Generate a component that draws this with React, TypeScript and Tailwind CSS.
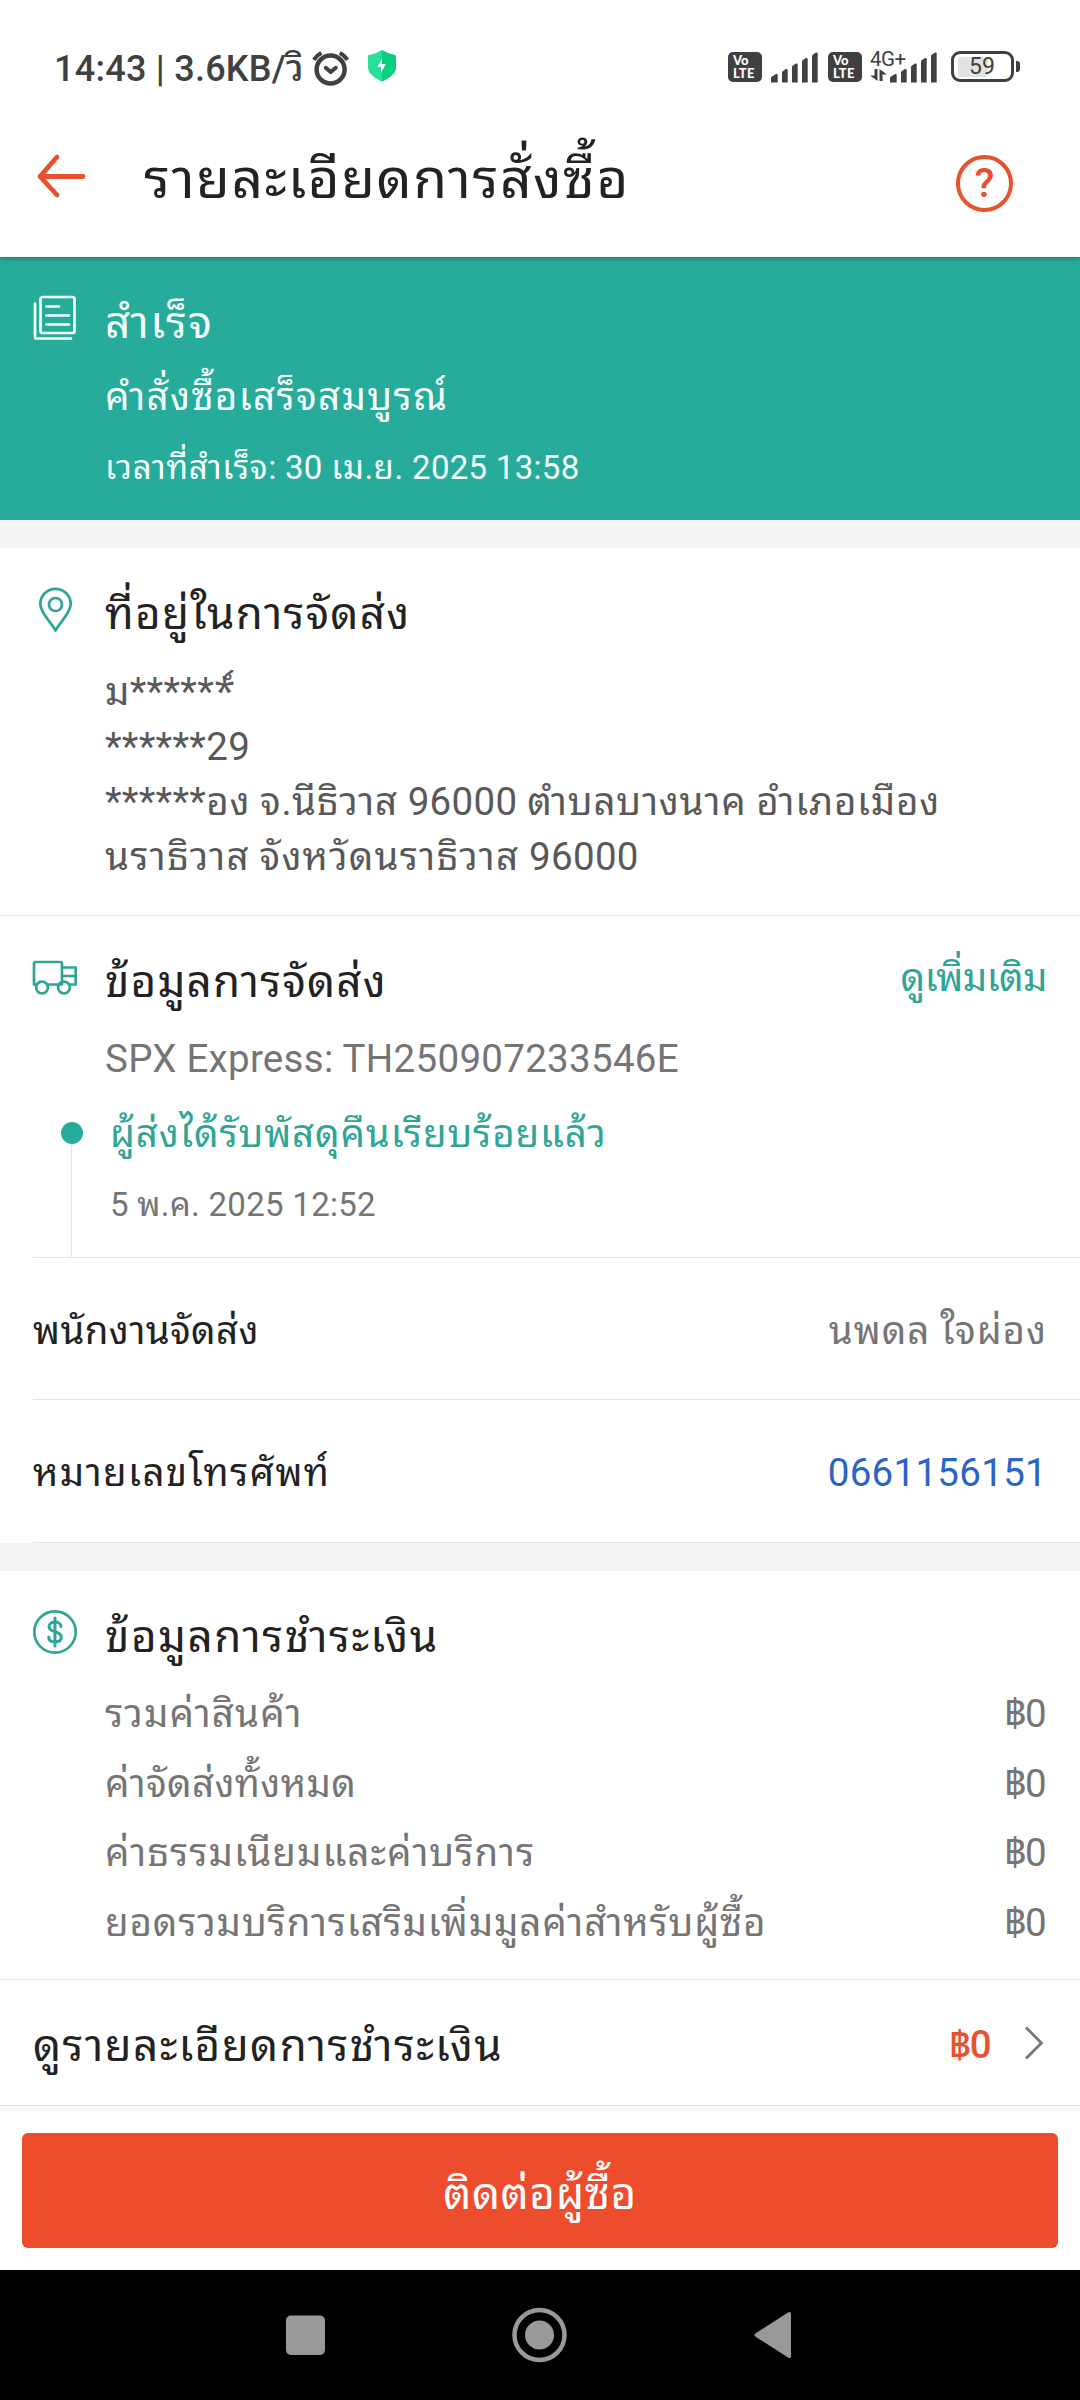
import type { ReactNode } from "react";

const TEAL = "#2fa595";

/* Splits mixed text so that Thai runs can be tracked independently of Latin ones. */
function T({ children, track }: { children: string; track: string }) {
  const runs = children.split(/([\u0E00-\u0E7F]+)/).filter(Boolean);
  return (
    <span className="tracking-[0.29px]">
      {runs.map((run, i) =>
        /^[\u0E00-\u0E7F]/.test(run) ? (
          <span key={i} className={track}>{run}</span>
        ) : (
          run
        )
      )}
    </span>
  );
}

function SignalBars() {
  return (
    <svg width="48" height="32" viewBox="0 0 48 32" fill="#404040">
      <path d="M0 31.5V27q0-1 1-1.500L5 23q1.700-.5 1.700 1v7.500z" />
      <path d="M11 31.500V21.500q0-1 1-1.500l3-2q1.700-.5 1.700 1v12.500z" />
      <path d="M21 31.500V16q0-1 1-1.500l3-2q1.700-.5 1.700 1v18z" />
      <path d="M31 31.500V10.500q0-1 1-1.500l3-2q1.700-.5 1.700 1v23.500z" />
      <path d="M41 31.500V5q0-1 1-1.500l3-2q1.700-.5 1.700 1v29z" />
    </svg>
  );
}

function VoLte() {
  return (
    <div className="flex h-[30px] w-[34px] flex-col justify-center rounded-[5px] bg-[#404040] pl-[5px] font-['Lato'] text-[13px] leading-[12.500px] font-black text-white">
      <span>Vo</span>
      <span className="tracking-[0.2px]">LTE</span>
    </div>
  );
}

function StatusBar() {
  return (
    <div className="flex h-[137px] items-center pl-[54px] text-[#404040]">
      <span className="w-[256px] text-[36px] leading-[50px] font-medium tracking-[0.25px] whitespace-nowrap">14:43 | 3.6KB/วิ</span>
      <svg className="mb-[2px]" width="42" height="42" viewBox="0 0 42 42" fill="none" stroke="#404040" strokeWidth="4.500" strokeLinecap="round" strokeLinejoin="round">
        <circle cx="20.600" cy="22.500" r="14" />
        <path d="M3.800 12.800Q7 8 11.500 6M37.400 12.800Q34.200 8 29.700 6" strokeWidth="4" strokeLinecap="butt" />
        <path d="M15.800 20.800l4.800 4.200 5.200-4.200" strokeWidth="4" />
      </svg>
      <svg className="mb-[6px] ml-4" width="28" height="32" viewBox="0 0 28 32">
        <path d="M14 0Q20 4 28 5.500V17c0 7-7 11-14 14.500C7 28 0 24 0 17V5.500Q8 4 14 0z" fill="#27e09a" />
        <path d="M14 0Q20 4 28 5.500V17c0 7-7 11-14 14.500z" fill="#06d17f" />
        <path d="M14 8.500L9.500 17H13v6l4.800-9H14z" fill="#fff" />
      </svg>
      <div className="mb-[4px] ml-auto flex items-center pr-[60px]">
        <VoLte />
        <div className="ml-[9px]"><SignalBars /></div>
        <div className="ml-[9px]"><VoLte /></div>
        <div className="ml-[8px] flex w-[20px] flex-col">
          <span className="-mt-[4px] w-[40px] text-[20.500px] leading-[20px] tracking-[-0.5px]">4G+</span>
          <svg width="17" height="12" viewBox="0 0 17 12" fill="#404040">
            <path d="M4.500 0H7.500V12L0 6.500H4.500z" />
            <path d="M9.500 12V0L17 5.500H12.500V12z" />
          </svg>
        </div>
        <SignalBars />
        <div className="ml-[13px] flex h-[31px] w-[63px] items-center rounded-[9px] border-[3.500px] border-[#404040] px-[4px]">
          <div className="h-[20px] w-[30px] rounded-[3px] bg-[#e3e3e3]" />
          <span className="-ml-[19px] text-[23px] leading-[24px]">59</span>
        </div>
        <div className="ml-[2px] h-[11px] w-[4px] rounded-r-[3px] bg-[#404040]" />
      </div>
    </div>
  );
}

function TitleBar() {
  return (
    <div className="flex h-[84px] items-center pr-[67px] pl-[36px]">
      <svg className="mb-[7px]" width="50" height="46" viewBox="0 0 50 46" fill="none" stroke="#e9512e" strokeWidth="4.800" strokeLinecap="round" strokeLinejoin="round">
        <path d="M47 23.500H4M21 4L4 23.500 21 42" />
      </svg>
      <h1 className="ml-[58px] text-[55px] leading-[84px] font-normal whitespace-nowrap text-[#222]">
        <T track="tracking-[1.5px]">รายละเอียดการสั่งซื้อ</T>
      </h1>
      <div className="mt-[8px] ml-auto flex h-[57px] w-[57px] items-center justify-center rounded-full border-4 border-[#e4542f] text-[41px] leading-[57px] font-medium text-[#e8512f]">?</div>
    </div>
  );
}

function DocIcon() {
  return (
    <svg width="44" height="46" viewBox="0 0 44 46" fill="none" stroke="#f4fffc" strokeWidth="2.700" strokeLinecap="round" strokeLinejoin="round">
      <rect x="7.500" y="2" width="34" height="36" rx="2" />
      <path d="M2 8.500V42q0 1.500 1.500 1.500H38M13.500 11.500H26M13.500 20.500H36M13.500 29.500H36" />
    </svg>
  );
}

function PinIcon() {
  return (
    <svg width="36" height="46" viewBox="0 0 36 46" fill="none" stroke={TEAL} strokeWidth="2.700" strokeLinejoin="round">
      <path d="M17.500 43.500C13 35 2.300 26 2.300 17a15.200 15.200 0 0 1 30.400 0C32.700 26 22 35 17.500 43.500z" />
      <circle cx="17.500" cy="17.500" r="6.500" />
    </svg>
  );
}

function TruckIcon() {
  return (
    <svg width="46" height="36" viewBox="0 0 46 36" fill="none" stroke={TEAL} strokeWidth="2.700" strokeLinejoin="round">
      <path d="M4.500 24.500H2V3.500Q2 2 3.500 2H28.500Q30 2 30 3.500V24.500H15.500M30 7.500H43.700V24.500H37.500M30 16H43.700" />
      <circle cx="10" cy="27.500" r="5.900" />
      <circle cx="32" cy="27.500" r="5.900" />
    </svg>
  );
}

function DollarIcon() {
  return (
    <svg width="46" height="46" viewBox="0 0 46 46" fill="none" stroke={TEAL} strokeWidth="3" strokeLinecap="round">
      <circle cx="23" cy="23" r="20.700" strokeWidth="2.700" />
      <path d="M29 17.500C29 14.500 26 13 23 13S17 14.500 17 17.800C17 24.500 29.300 21 29.300 28 29.300 31.500 26.500 33 23 33S16.700 31.500 16.700 28M23 9V37" />
    </svg>
  );
}

function Section({ icon, children }: { icon: ReactNode; children: ReactNode }) {
  return (
    <div className="flex">
      <div className="w-[105px] shrink-0">{icon}</div>
      <div className="min-w-0 flex-1 pr-[33px]">{children}</div>
    </div>
  );
}

const fees = [
  { label: "รวมค่าสินค้า", track: "tracking-[1.1px]" },
  { label: "ค่าจัดส่งทั้งหมด", track: "tracking-[0.36px]" },
  { label: "ค่าธรรมเนียมและค่าบริการ", track: "tracking-[1.03px]" },
  { label: "ยอดรวมบริการเสริมเพิ่มมูลค่าสำหรับผู้ซื้อ", track: "tracking-[0.84px]" },
];

export default function App() {
  return (
    <div className="flex h-[2400px] w-[1080px] flex-col overflow-hidden bg-white font-[Roboto,'Noto_Sans_Thai_Looped',sans-serif] text-[38.500px] whitespace-nowrap">
      <header className="relative h-[257px] shrink-0 bg-white shadow-[0_1px_5px_rgba(0,0,0,0.35)]">
        <StatusBar />
        <TitleBar />
      </header>

      <section className="h-[263px] shrink-0 bg-[#27ab9a] pt-[36px] text-[#f4fffc]">
        <Section icon={<div className="mt-[2px] ml-[33px]"><DocIcon /></div>}>
          <h2 className="text-[44px] leading-[60px]"><T track="tracking-[1.5px]">สำเร็จ</T></h2>
          <p className="mt-[17px] leading-[54px]"><T track="tracking-[1.35px]">คำสั่งซื้อเสร็จสมบูรณ์</T></p>
          <p className="mt-[19px] text-[33px] leading-[50px]"><T track="tracking-[0.7px]">เวลาที่สำเร็จ: 30 เม.ย. 2025 13:58</T></p>
        </Section>
      </section>
      <div className="h-[28px] shrink-0 bg-[#f4f4f4]" />

      <section className="h-[368px] shrink-0 border-b border-[#e4e4e4] pt-[36px]">
        <Section icon={<div className="mt-[3px] ml-[38px]"><PinIcon /></div>}>
          <h2 className="text-[44px] leading-[60px] text-[#222]"><T track="tracking-[1.27px]">ที่อยู่ในการจัดส่ง</T></h2>
          <div className="mt-[20px] leading-[55px] text-[#595959]">
            <p className="tracking-[0.29px]">ม******์</p>
            <p><T track="">******29</T></p>
            <p><T track="tracking-[0.74px]">******อง จ.นีธิวาส 96000 ตำบลบางนาค อำเภอเมือง</T></p>
            <p><T track="tracking-[1.16px]">นราธิวาส จังหวัดนราธิวาส 96000</T></p>
          </div>
        </Section>
      </section>

      <section className="h-[341px] shrink-0 pt-[36px]">
        <Section icon={<div className="mt-[8px] ml-[32px]"><TruckIcon /></div>}>
          <div className="flex h-[60px] justify-between">
            <h2 className="text-[44px] leading-[60px] text-[#222]"><T track="tracking-[1.15px]">ข้อมูลการจัดส่ง</T></h2>
            <a className="leading-[52px] text-[#2fa595]"><T track="tracking-[-0.55px]">ดูเพิ่มเติม</T></a>
          </div>
          <p className="mt-[20px] leading-[54px] text-[#757575]"><T track="">SPX Express: TH250907233546E</T></p>
        </Section>
        <div className="mt-[21px] flex h-[150px]">
          <div className="ml-[61px] flex w-[22px] flex-col pt-[15px]">
            <div className="h-[22px] w-[22px] shrink-0 rounded-full bg-[#27ab9a]" />
            <div className="ml-[10px] w-px flex-1 bg-[#e4e4e4]" />
          </div>
          <div className="ml-[27px]">
            <p className="leading-[54px] text-[#2fa595]"><T track="tracking-[0.85px]">ผู้ส่งได้รับพัสดุคืนเรียบร้อยแล้ว</T></p>
            <p className="mt-[19px] text-[33px] leading-[50px] text-[#757575]"><T track="">5 พ.ค. 2025 12:52</T></p>
          </div>
        </div>
      </section>

      <section className="ml-[33px] shrink-0 border-t border-[#e4e4e4] text-[#222]">
        <div className="flex h-[142px] items-center justify-between border-b border-[#e4e4e4] pt-[5px] pr-[33px]">
          <T track="tracking-[0.35px]">พนักงานจัดส่ง</T>
          <div className="text-[#757575]"><T track="tracking-[1px]">นพดล ใจผ่อง</T></div>
        </div>
        <div className="flex h-[143px] items-center justify-between border-b border-[#e4e4e4] pt-[4px] pr-[33px]">
          <T track="tracking-[1.35px]">หมายเลขโทรศัพท์</T>
          <div className="text-[#2964c8]"><T track="">0661156151</T></div>
        </div>
      </section>
      <div className="h-[28px] shrink-0 bg-[#f4f4f4]" />

      <section className="h-[409px] shrink-0 border-b border-[#e4e4e4] pt-[36px]">
        <Section icon={<div className="mt-[2px] ml-[32px]"><DollarIcon /></div>}>
          <h2 className="text-[44px] leading-[60px] text-[#222]"><T track="tracking-[1.5px]">ข้อมูลการชำระเงิน</T></h2>
          <div className="mt-[12px] text-[#757575]">
            {fees.map((f) => (
              <div key={f.label} className="flex justify-between leading-[69.600px]">
                <T track={f.track}>{f.label}</T>
                <T track="tracking-[-1px]">฿0</T>
              </div>
            ))}
          </div>
        </Section>
      </section>

      <section className="flex h-[126px] shrink-0 items-center border-b border-[#e0e0e0] pr-[36px] pl-[33px]">
        <div className="mt-[7px] text-[44px] leading-[60px] text-[#222]"><T track="tracking-[1.4px]">ดูรายละเอียดการชำระเงิน</T></div>
        <div className="mt-[5px] ml-auto font-medium text-[#e8512f]"><T track="tracking-[-1px]">฿0</T></div>
        <svg className="ml-[32px]" width="20" height="34" viewBox="0 0 20 34" fill="none" stroke="#757575" strokeWidth="2.700">
          <path d="M2 1.500L17.500 17 2 32.500" />
        </svg>
      </section>
      <div className="h-[5px] shrink-0 bg-[#f8f8f8]" />

      <div className="h-[159px] shrink-0 px-[22px] pt-[22px]">
        <button className="flex h-[115px] w-full items-center justify-center rounded-[6px] bg-[#ee4d2d] pt-[7px] text-[44px] text-white">
          <T track="tracking-[0.6px]">ติดต่อผู้ซื้อ</T>
        </button>
      </div>

      <nav className="h-[130px] shrink-0 bg-black">
        <svg width="1080" height="130" viewBox="0 0 1080 130" fill="#999">
          <rect x="286" y="45.500" width="39" height="39.500" rx="5" />
          <circle cx="539.500" cy="65" r="25" fill="none" stroke="#999" strokeWidth="4.500" />
          <circle cx="539.500" cy="65" r="14.500" />
          <path d="M756 63L788 42.500Q791 41 791 44V86Q791 89 788 87.500L756 67Q753 65 756 63z" />
        </svg>
      </nav>
    </div>
  );
}
